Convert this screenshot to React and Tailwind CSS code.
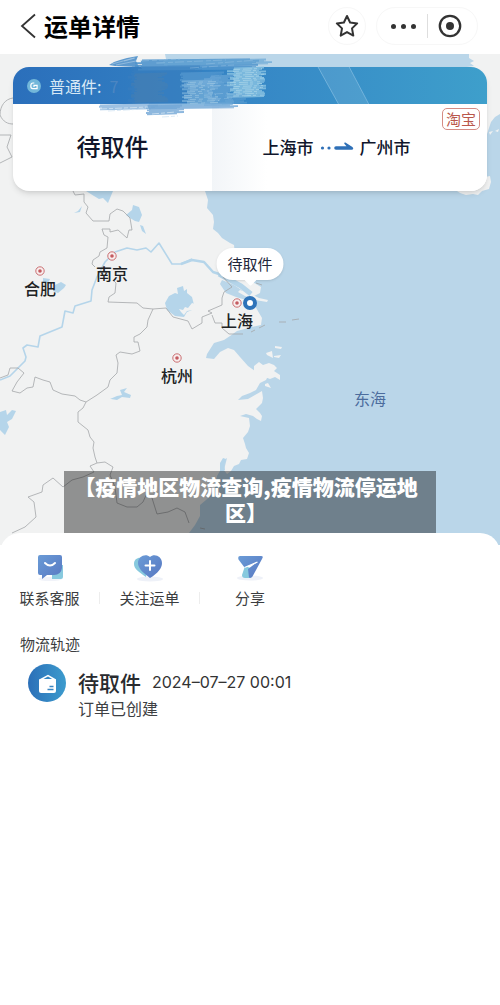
const cities = [
  { name: '合肥', position: 'left-[8%] top-[43.2%]' },
  { name: '南京', position: 'left-[22.4%] top-[40.2%]' },
  { name: '上海', position: 'left-[47.4%] top-[49.6%]' },
  { name: '杭州', position: 'left-[35.4%] top-[60.8%]' },
]

// Marker patches that hide the waybill number, each hatched with thin strokes
const patches = [
  { x: 142, y: 60, width: 108, height: 10, color: '#4f94cc', opacity: 0.9 },
  { x: 165, y: 60, width: 98, height: 5, color: '#69a6d4', opacity: 0.7 },
  { x: 134, y: 67, width: 60, height: 36, color: '#3a7ebd', opacity: 0.5 },
  { x: 138, y: 74, width: 20, height: 28, color: '#5682a6', opacity: 0.3 },
  { x: 104, y: 105, width: 44, height: 5, color: '#86b1db', opacity: 0.8 },
  { x: 154, y: 104, width: 74, height: 4, color: '#6ea5d6', opacity: 0.8 },
  { x: 153, y: 106, width: 22, height: 9, color: '#72a6d6', opacity: 0.8 },
  { x: 188, y: 73, width: 26, height: 14, color: '#5c9dd2', opacity: 0.6 },
  { x: 190, y: 81, width: 20, height: 24, color: '#86b9de', opacity: 0.6 },
  { x: 211, y: 76, width: 17, height: 29, color: '#73abd9', opacity: 0.6 },
  { x: 235, y: 68, width: 21, height: 29, color: '#8cc4e2', opacity: 0.8 },
  { x: 228, y: 94, width: 10, height: 10, color: '#68a5d6', opacity: 0.5 },
]

const hatch = ({ x, y, width, height }, step, seed) => {
  let d = ''
  for (let i = 0; i * step < height; i += 1) {
    const start = x - ((i * i * 7 + i * 3 + seed) % 9)
    const end = x + width + ((i * i * 5 + i * 4 + seed * 3) % 11)
    d += `M${start} ${y + i * step + 0.5}L${end} ${y + i * step - 0.5}`
  }
  return d
}

const Scribble = () => (
  <svg
    viewBox="95 53 182 66"
    className="pointer-events-none absolute -top-3.5 left-[82px] h-[66px] w-[182px]"
    fill="none"
    aria-hidden
  >
    <path d="m109 65 5-3 6-2 7-2 11-2-2 5 3 6-24-1Z" fill="#5f9ace" />
    <path d="m112 64 22-6m-18 7 20-4m-12 0 11-3" stroke="#a3c5e3" strokeWidth=".7" />
    {patches.map((patch, index) => (
      <path
        key={`${patch.x}-${patch.y}`}
        d={hatch(patch, 1.3, index)}
        stroke={patch.color}
        strokeWidth="1.9"
        opacity={patch.opacity}
      />
    ))}
    <path
      d={hatch({ x: 236, y: 69, width: 20, height: 27 }, 1.9, 2)}
      stroke="#c4e5ef"
      strokeWidth=".7"
      strokeDasharray="6 3 9 2 3 4"
      opacity=".7"
    />
    <path
      d={hatch({ x: 191, y: 82, width: 18, height: 22 }, 1.9, 3)}
      stroke="#bcdaec"
      strokeWidth=".7"
      strokeDasharray="8 3 4 5"
      opacity=".6"
    />
    <path
      d="m212 86 18-1m-16 9 16-1m-18 6 20-1m-92-37 40-2m-24 4 70-3m-20 4 50-4m-66 8 44-3"
      stroke="#9dc6e4"
      strokeWidth=".7"
      strokeDasharray="9 3 5 2"
      opacity=".6"
    />
    <path
      d="m100 109 48-2m-40 4 36-2m8 5 24-2m-14 5 16-1"
      stroke="#d3e4f3"
      strokeWidth=".8"
      strokeDasharray="7 2 4 2"
    />
  </svg>
)

const MapCanvas = () => (
  <svg
    viewBox="0 54 500 491"
    className="absolute inset-0 h-full w-full"
    fill="none"
    role="img"
    aria-label="地图"
  >
    <path fill="#bad6e9" d="M0 54h500v491H0z" />
    <path
      fill="#f1f2f2"
      d="M0 54h165l4 20 10 22 12 45 11 40 3 10 3 9-1 8 6 7 1 7-1 7 5 4 4 5 8 5 4 2 1 10 6 20 20 12-1 6-6 3-8-3-12-8-12-5-2 4 6 9 10 4 10 3 9 6 7 12-1 7-9 2-15 4-7 5-6 4-10 3-7 11-1 4 8 1 6-7 8-4 6 2 6 7 8 9 7 5 5 2 8 3-2 4-6 3-4 7-6 3-8 3-4 4 10-1 7-4 7-4 1 7-1 5-6 6 4 4 2 3-1 5-4-2-4-3-7-2-6 2 9 2 1 8-2 6-5 6 2 6 1 4 3 5-2 6-6 1-2 4-5 2-3 5-4 3-3-4 2-8 1-4-4 3-2 8-4 7-2 11-4 8-5 5-6 5v11l-5 9-6 8-8 5-2 12H0Z"
    />
    <g fill="#f1f2f2">
      <path d="m240 290 9 3 10 5 9 2-1 2-12-2-10-4-7-4Z" />
      <path d="m254 366 5-4 4 3 6-2 5 2 3 3-3 3 6 4v5l-5-3-5 2-8-3-8-3Zm12-13 6-2 1 7-6-3Zm9-7 7 1-1 2-6-1Zm-1 10 7-1-2 3-5-1Zm-9 28 3-1 3 5-6-2Z" />
      <path d="M469 54h31v60l-5 3-4 5-4 12-9-30-11-37 7-1-4-3 4-2-5-3Z" />
      <path d="m457 191 3 2 6 2 7-1 5 1 4-4 7-2 2-7-1-6-5 1-9 5Z" />
      <path d="m489 132 4-1-3 4Zm6-1 4-2-1 3Z" />
    </g>

    {/* water */}
    <g fill="#b5d5ea">
      <path d="m86 191 8 5 5 3 4-1 5 5 5-12Z" />
      <path d="m126 215 6-5 1-5 6 2 3 8-3 7-4-1-5-3Zm14 10 3 1 3 8-4-3Z" />
      <path d="m74 213 4-2 4-5-2 6Z" />
      <path d="m165 303 4-7 6-3 3 1-1-6 6-2 1 5 3-2v4l5 4 2 8-2 5-5 2-3 5-9-1-8-6Z" />
      <path d="m55 285 6-3 5 3-2 3-6 5-5-2Z" />
      <path d="m110 399 7-3 5-1-2-5 7-2-3 4 7 3-1 3-8-1-5 3-6-1Z" />
      <path d="m0 412 6-2 1 5 5-5 4 1-4 8-5 3 2 5-4 8-5-5Z" />
      <path d="m43 278 7 1-2 4-5-1Z" />
      <path d="m220 463 3-5 3 1-2 6 1 5-5 2Z" />
    </g>
    <path fill="#f1f2f2" d="m179 309 4 1 2-3 3 1 4-5 3 1-2 6-6 1-3 4-3-3Z" />
    <g stroke="#b5d5ea" strokeLinejoin="round">
      <path
        strokeWidth="1.6"
        d="M0 380L10 376L25 361L26 357L23 348L27 345L38 347L40 336L62 327L65 311L73 313L75 306L91 301L92 290L97 277L105 262L115 252L127 248L137 250L146 248L151 252L159 243L172 264L181 264L192 259"
      />
      <path strokeWidth="2.5" d="M181 264L192 260L204 262L213 272L222 275" />
      <path strokeWidth="5" d="m219 274 11 6 11 6 10 8" />
    </g>

    {/* province borders */}
    <g stroke="#a4a7a9" strokeWidth=".8" strokeLinejoin="round">
      <path d="M73 191L75 195L84 194L84 202L88 207L86 213L93 221L109 221L110 214L117 209L123 211L130 218L132 230L129 230L127 238L118 230L110 232L110 229L102 229L104 235L108 237L107 248L100 252L99 256L93 260L92 264L95 267" />
      <path d="M113 280L116 283L115 293L109 297L108 302L137 303L143 308L153 309L148 320L147 327L140 334L134 337L134 342L138 342L140 351L132 354L120 352L116 355L118 363L117 373L110 380L108 387L97 395L86 402" />
      <path d="M0 378L8 375L10 368L18 368L24 373L17 382L12 391L20 393L27 388L33 387L35 377L43 380L50 382L53 390L62 394L75 396L80 400L86 402L83 408L78 412L78 422L88 430L90 437L94 442L93 448L95 457L97 463" />
      <path d="M97 463L105 462L113 467L110 475L115 487L117 503L127 507L137 507L143 502L147 493L152 498L157 514L168 512L177 508L185 512L189 523M200 528L205 529" />
      <path d="M97 463L90 466L94 472L83 477L72 480L63 487L53 478L43 485L42 492L28 497L34 502L36 517L25 527L12 533" />
      <path d="M153 309L166 308L173 317L188 321L192 329L202 323L202 317L212 313L208 311L222 305L222 298L224 292L232 287L223 277M212 315L215 323L222 323L222 328L229 334L243 334" />
      <path d="m251 332 4-2m4-2 6-3m14-3h7m6-2 7-1m-43-36 6 2" />
      <path d="M0 115c0-9 5-16 13-17M0 115c3 7 8 9 13 9M0 135h11l-4 12 5 10L0 163" />
    </g>
  </svg>
)

const CityMarker = ({ name, position }) => (
  <div className={`absolute flex -translate-x-1/2 flex-col items-center ${position}`}>
    <svg viewBox="0 0 10 10" className="h-2.5 w-2.5" fill="none" aria-hidden>
      <circle cx="5" cy="5" r="4.2" fill="#f8eeee" stroke="#c96f72" />
      <circle cx="5" cy="5" r="1.8" fill="#c45b60" />
    </svg>
    <span className="text-base leading-6 font-medium text-[#202224]">{name}</span>
  </div>
)

const RouteArrow = () => (
  <svg viewBox="0 0 34 12" className="h-3 w-[34px]" fill="#2f70b7" aria-label="至">
    <circle cx="2.5" cy="7" r="1.6" />
    <circle cx="9" cy="7" r="1.6" />
    <path d="M16 5.2h10.5l-2-2.2c-.7-1 .2-1.9 1.3-1.3l6.6 4.4c1.4 1.1 1 2.7-.7 2.700H16a1.800 1.800 0 0 1 0-3.600Z" />
  </svg>
)

const Header = () => (
  <header className="flex h-[54px] items-center justify-between bg-white pr-[22px] pl-3">
    <div className="flex items-center pb-0.5">
      <button type="button" aria-label="返回" className="flex w-8 justify-center">
        <svg viewBox="0 0 16 26" className="h-[26px] w-4" fill="none" stroke="#333" strokeWidth="1.8" aria-hidden>
          <path d="M15 1.5 2 13l13 11.5" />
        </svg>
      </button>
      <h1 className="text-2xl leading-8 font-bold text-black">运单详情</h1>
    </div>
    <div className="flex items-center gap-2.5 pb-0.5">
      <button
        type="button"
        aria-label="收藏"
        className="flex h-[38px] w-[38px] items-center justify-center rounded-full border border-[#f7f7f7]"
      >
        <svg viewBox="0 0 24 24" className="h-6 w-6" fill="none" stroke="#333" strokeWidth="2" strokeLinejoin="round" aria-hidden>
          <path d="m12 2 3.1 6.5 7.1.9-5.2 5 1.3 7.2-6.3-3.5-6.3 3.5L7 14.4l-5.2-5 7.1-.9Z" />
        </svg>
      </button>
      <div className="flex h-[38px] w-[102px] items-center rounded-full border border-[#f7f7f7]">
        <button type="button" aria-label="更多" className="flex h-full flex-1 items-center justify-center gap-[5px] pl-1">
          <i className="h-[5px] w-[5px] rounded-full bg-[#333]" />
          <i className="h-[5px] w-[5px] rounded-full bg-[#333]" />
          <i className="h-[5px] w-[5px] rounded-full bg-[#333]" />
        </button>
        <span className="h-6 w-px bg-[#dedede]" />
        <button type="button" aria-label="关闭" className="flex h-full flex-1 items-center justify-center pr-1">
          <svg viewBox="0 0 24 24" className="h-6 w-6" fill="none" aria-hidden>
            <circle cx="12" cy="12" r="10.2" stroke="#333" strokeWidth="2.3" />
            <circle cx="12" cy="12" r="4" fill="#333" />
          </svg>
        </button>
      </div>
    </div>
  </header>
)

const WaybillCard = () => (
  <div className="relative mx-[13px] rounded-2xl bg-white shadow-md">
    <div className="relative flex h-[37px] items-center gap-2 overflow-hidden rounded-t-2xl bg-linear-to-r from-[#2b6fbb] via-[#3687c6] to-[#3e9fcb] pl-3.5">
      <svg viewBox="0 0 14 14" className="h-3.5 w-3.5" fill="none" aria-hidden>
        <circle cx="7" cy="7" r="7" fill="#72b7da" />
        <path d="M7.3 4H6C4.4 4 3.8 5.2 3.8 7s.6 2.7 2 2.7h4.3V6.4H7v1.5" stroke="#fff" strokeWidth="1.2" />
      </svg>
      <span className="text-base leading-6 text-[#d7e8f5]">普通件:</span>
      <span className="text-base leading-6 text-[#4c86c2]">7</span>
      <svg viewBox="0 0 80 38" className="absolute top-0 right-[90px] h-full w-20" fill="none" aria-hidden>
        <path d="M0 0h32l20 38H21Z" fill="#fff" opacity=".1" />
        <path d="m0 0 21 38M32 0l20 38" stroke="#7fbbe0" strokeWidth=".8" />
      </svg>
    </div>
    <div className="relative flex h-[87px]">
      <div className="flex w-[42%] items-center justify-center pb-1 text-2xl leading-8 font-medium text-[#10162c]">
        待取件
      </div>
      <div className="flex flex-1 items-center justify-center gap-1.5 rounded-br-2xl bg-linear-to-r from-[#f2f5f8] to-white to-20% pr-[26px] pb-0.5 text-[17px] leading-6 font-medium text-[#10162c]">
        <span>上海市</span>
        <RouteArrow />
        <span>广州市</span>
      </div>
      <span className="absolute top-1 right-[7px] rounded-[5px] border border-[#d58c84] px-[3px] text-[15px] leading-5 text-[#b9574c]">
        淘宝
      </span>
    </div>
    <Scribble />
  </div>
)

const TrackMap = () => (
  <section className="relative aspect-[500/491] w-full overflow-hidden pt-[13px]">
    <MapCanvas />
    <WaybillCard />
    {cities.map((city) => (
      <CityMarker key={city.name} {...city} />
    ))}
    <div className="absolute top-[39.5%] left-1/2 flex -translate-x-1/2 flex-col items-center">
      <span className="rounded-2xl bg-white px-[11px] py-1 text-[15px] leading-6 text-[#20263a] shadow-sm">待取件</span>
      <svg viewBox="0 0 12 6" className="h-1.5 w-3" fill="#fff" aria-hidden>
        <path d="M0 0h12L7 5q-1 1-2 0Z" />
      </svg>
    </div>
    <span className="absolute top-[49.2%] left-1/2 h-3.5 w-3.5 -translate-x-1/2 rounded-full border-4 border-[#2e73b9] bg-white" />
    <span className="absolute top-[67.6%] left-[74%] -translate-x-1/2 text-base leading-6 text-[#4b6c9d]">东海</span>
    <p className="absolute inset-x-16 bottom-3 bg-black/40 pt-0.5 pr-4 pb-2 pl-2 text-center text-[21px] leading-[26px] font-black text-white">
      【疫情地区物流查询,疫情物流停运地区】
    </p>
  </section>
)

const ServiceIcon = () => (
  <svg viewBox="0 0 32 30" className="h-[30px] w-8" aria-hidden>
    <ellipse cx="16" cy="27" rx="12" ry="2" fill="#f1f3f9" />
    <path d="M18 13h11v12q0 2-2 2h-9Z" fill="#87c9de" />
    <path d="M6 3h20q2 0 2 2v11q-1 7-8 7h-7l-5 4v-4H6q-2 0-2-2V5q0-2 2-2Z" fill="url(#action)" />
    <path d="M11 11q5 5 10 0" fill="none" stroke="#fff" strokeWidth="2" strokeLinecap="round" />
  </svg>
)

const FollowIcon = () => (
  <svg viewBox="0 0 32 30" className="h-[30px] w-8" aria-hidden>
    <ellipse cx="16" cy="27" rx="13" ry="2.5" fill="#eef1f8" />
    <path d="M12 25C5 20 0 17 0 12c0-5 4-7 8-6l7 4Z" fill="#87c9de" />
    <path d="M16 26C8 20 4 16 4 11c0-7 8-10 12-6 4-4 12-1 12 6 0 5-4 10-12 15Z" fill="url(#action)" />
    <path d="M16 9v9m-4.5-4.5h9" fill="none" stroke="#fff" strokeWidth="2" strokeLinecap="round" />
  </svg>
)

const ShareIcon = () => (
  <svg viewBox="0 0 32 30" className="h-[30px] w-8" aria-hidden>
    <ellipse cx="16" cy="26" rx="13" ry="2.5" fill="#eef1f8" />
    <path d="m11 14-3 9q0 3 3 3h6l2-9Z" fill="#87c9de" />
    <path d="M6 4h21q3 0 1 3L18.5 24.500q-1.500 2-3.500 1l-1-8.500 9.500-7-13 5.500L4.500 7.500Q3.500 4 6 4Z" fill="url(#action)" />
    <path d="m23.500 10-13 5.500" stroke="#fff" strokeWidth="1.200" />
  </svg>
)

const actions = [
  { label: '联系客服', Icon: ServiceIcon },
  { label: '关注运单', Icon: FollowIcon },
  { label: '分享', Icon: ShareIcon },
]

const ActionBar = () => (
  <nav className="grid grid-cols-5">
    {actions.map(({ label, Icon }, index) => (
      <button key={label} type="button" className="flex flex-col items-center gap-2.5">
        <Icon />
        <span
          className={`w-full border-[#ededed] text-center text-[15px] leading-3 text-[#3b3d40] ${index < 2 ? 'border-r' : ''}`}
        >
          {label}
        </span>
      </button>
    ))}
  </nav>
)

const Timeline = () => (
  <section className="pt-7">
    <h2 className="pl-5 text-[15px] leading-6 text-[#3b3d40]">物流轨迹</h2>
    <div className="flex gap-3 pt-2 pl-7">
      <svg viewBox="0 0 38 38" className="h-[38px] w-[38px] shrink-0" aria-hidden>
        <circle cx="19" cy="19" r="19" fill="url(#status)" />
        <path d="M11 16q0-1 1-1h15q1 0 1 1v11q0 2-2 2H13q-2 0-2-2Z" fill="#fff" />
        <path d="m12 16 8-4.5 7.5 4.5" fill="none" stroke="#fff" strokeWidth="1.5" />
        <path d="M21.5 22.5h4m-6 3h6" stroke="#3886c3" strokeWidth="1.5" />
      </svg>
      <div className="pt-1">
        <div className="flex items-center gap-[11px]">
          <h3 className="text-[21px] leading-7 font-medium text-[#292b2e]">待取件</h3>
          <time dateTime="2024-07-27T00:01" className="font-['Inter',sans-serif] text-base leading-7 text-[#333]">
            2024–07–27 00:01
          </time>
        </div>
        <p className="text-base leading-6 text-[#3e4043]">订单已创建</p>
      </div>
    </div>
  </section>
)

const App = () => (
  <div className="flex min-h-screen flex-col bg-white font-['Noto_Sans_CJK_SC',sans-serif]">
    <svg className="absolute h-0 w-0" aria-hidden>
      <defs>
        <linearGradient id="action" x1="0" y1="0" x2="1" y2="1">
          <stop stopColor="#6a9bd6" />
          <stop offset="1" stopColor="#5878c2" />
        </linearGradient>
        <linearGradient id="status">
          <stop stopColor="#2b6fb8" />
          <stop offset="1" stopColor="#3c9bcd" />
        </linearGradient>
      </defs>
    </svg>
    <Header />
    <TrackMap />
    <main className="relative -mt-3 flex-1 rounded-t-[20px] bg-white pt-[19px]">
      <ActionBar />
      <Timeline />
    </main>
  </div>
)

export default App
